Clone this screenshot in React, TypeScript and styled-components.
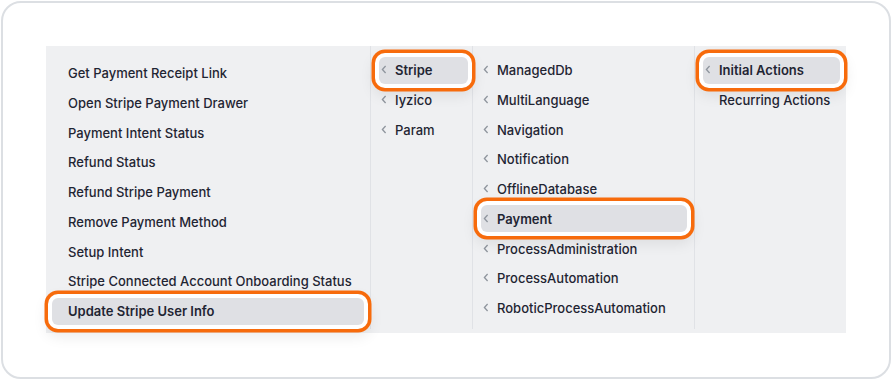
import styled, { createGlobalStyle } from 'styled-components';

const GlobalStyle = createGlobalStyle`
	body {
		margin: 0;
		background: #ffffff;
		font-family: Inter, 'Noto Sans', sans-serif;
	}
`;

const Card = styled.div`
	box-sizing: border-box;
	width: 890px;
	height: 378px;
	margin: 1px;
	padding: 43px;
	border: 2px solid #dcdfe3;
	border-radius: 20px;
	background: #ffffff;
`;

const Panel = styled.div`
	display: flex;
	width: 800px;
	height: 287px;
	background: #eff0f2;
`;

const Column = styled.div<{ $width?: number; $top: number; $left: number; $right: number; $divider?: boolean }>`
	box-sizing: border-box;
	width: ${p => (p.$width ? `${p.$width}px` : 'auto')};
	flex: ${p => (p.$width ? 'none' : '1')};
	display: flex;
	flex-direction: column;
	gap: 2.75px;
	padding: ${p => `${p.$top}px ${p.$right}px 0 ${p.$left}px`};
	margin-bottom: 4px;
	border-left: ${p => (p.$divider ? '1px solid #e0e2e6' : 'none')};
`;

const Item = styled.div<{ $active?: boolean; $ring?: boolean }>`
	position: relative;
	z-index: ${p => (p.$ring ? 1 : 0)};
	display: flex;
	align-items: center;
	height: 27px;
	padding-left: 16px;
	border-radius: 6px;
	font-size: 13px;
	font-weight: ${p => (p.$active ? 600 : 500)};
	color: #1f2533;
	white-space: nowrap;
	background: ${p => (p.$active ? '#dfe0e4' : 'transparent')};
	box-shadow: ${p =>
		p.$ring
			? '0 0 0 4px #ffffff, 0 0 0 7.5px #f76b0c, 0 6px 14px 6px rgba(0, 0, 0, 0.08)'
			: 'none'};
`;

const Chevron = styled.svg`
	position: absolute;
	left: 2px;
	top: 50%;
	width: 6px;
	height: 9px;
	margin-top: -5px;
`;

const Arrow = () => (
	<Chevron viewBox="0 0 6 9">
		<polyline points="4.6,1 1.4,4.5 4.6,8" fill="none" stroke="#8f959e" strokeWidth="1.3" />
	</Chevron>
);

type Entry = { label: string; active?: boolean; chevron?: boolean };

const actions: Entry[] = [
	{ label: 'Get Payment Receipt Link' },
	{ label: 'Open Stripe Payment Drawer' },
	{ label: 'Payment Intent Status' },
	{ label: 'Refund Status' },
	{ label: 'Refund Stripe Payment' },
	{ label: 'Remove Payment Method' },
	{ label: 'Setup Intent' },
	{ label: 'Stripe Connected Account Onboarding Status' },
	{ label: 'Update Stripe User Info', active: true },
];

const providers: Entry[] = [
	{ label: 'Stripe', active: true, chevron: true },
	{ label: 'Iyzico', chevron: true },
	{ label: 'Param', chevron: true },
];

const modules: Entry[] = [
	'ManagedDb',
	'MultiLanguage',
	'Navigation',
	'Notification',
	'OfflineDatabase',
	'Payment',
	'ProcessAdministration',
	'ProcessAutomation',
	'RoboticProcessAutomation',
].map(label => ({ label, chevron: true, active: label === 'Payment' }));

const groups: Entry[] = [
	{ label: 'Initial Actions', active: true, chevron: true },
	{ label: 'Recurring Actions' },
];

const MenuItem = ({ entry }: { entry: Entry }) => (
	<Item $active={entry.active} $ring={entry.active}>
		{entry.chevron && <Arrow />}
		{entry.label}
	</Item>
);

export default function App() {
	return (
		<>
			<GlobalStyle />
			<Card>
				<Panel>
					<Column $width={324} $top={13.5} $left={6} $right={6}>
						{actions.map(e => (
							<MenuItem key={e.label} entry={e} />
						))}
					</Column>
					<Column $width={102} $top={10.5} $left={8} $right={4} $divider>
						{providers.map(e => (
							<MenuItem key={e.label} entry={e} />
						))}
					</Column>
					<Column $width={222} $top={10.5} $left={8} $right={7} $divider>
						{modules.map(e => (
							<MenuItem key={e.label} entry={e} />
						))}
					</Column>
					<Column $top={10.5} $left={8} $right={6} $divider>
						{groups.map(e => (
							<MenuItem key={e.label} entry={e} />
						))}
					</Column>
				</Panel>
			</Card>
		</>
	);
}
